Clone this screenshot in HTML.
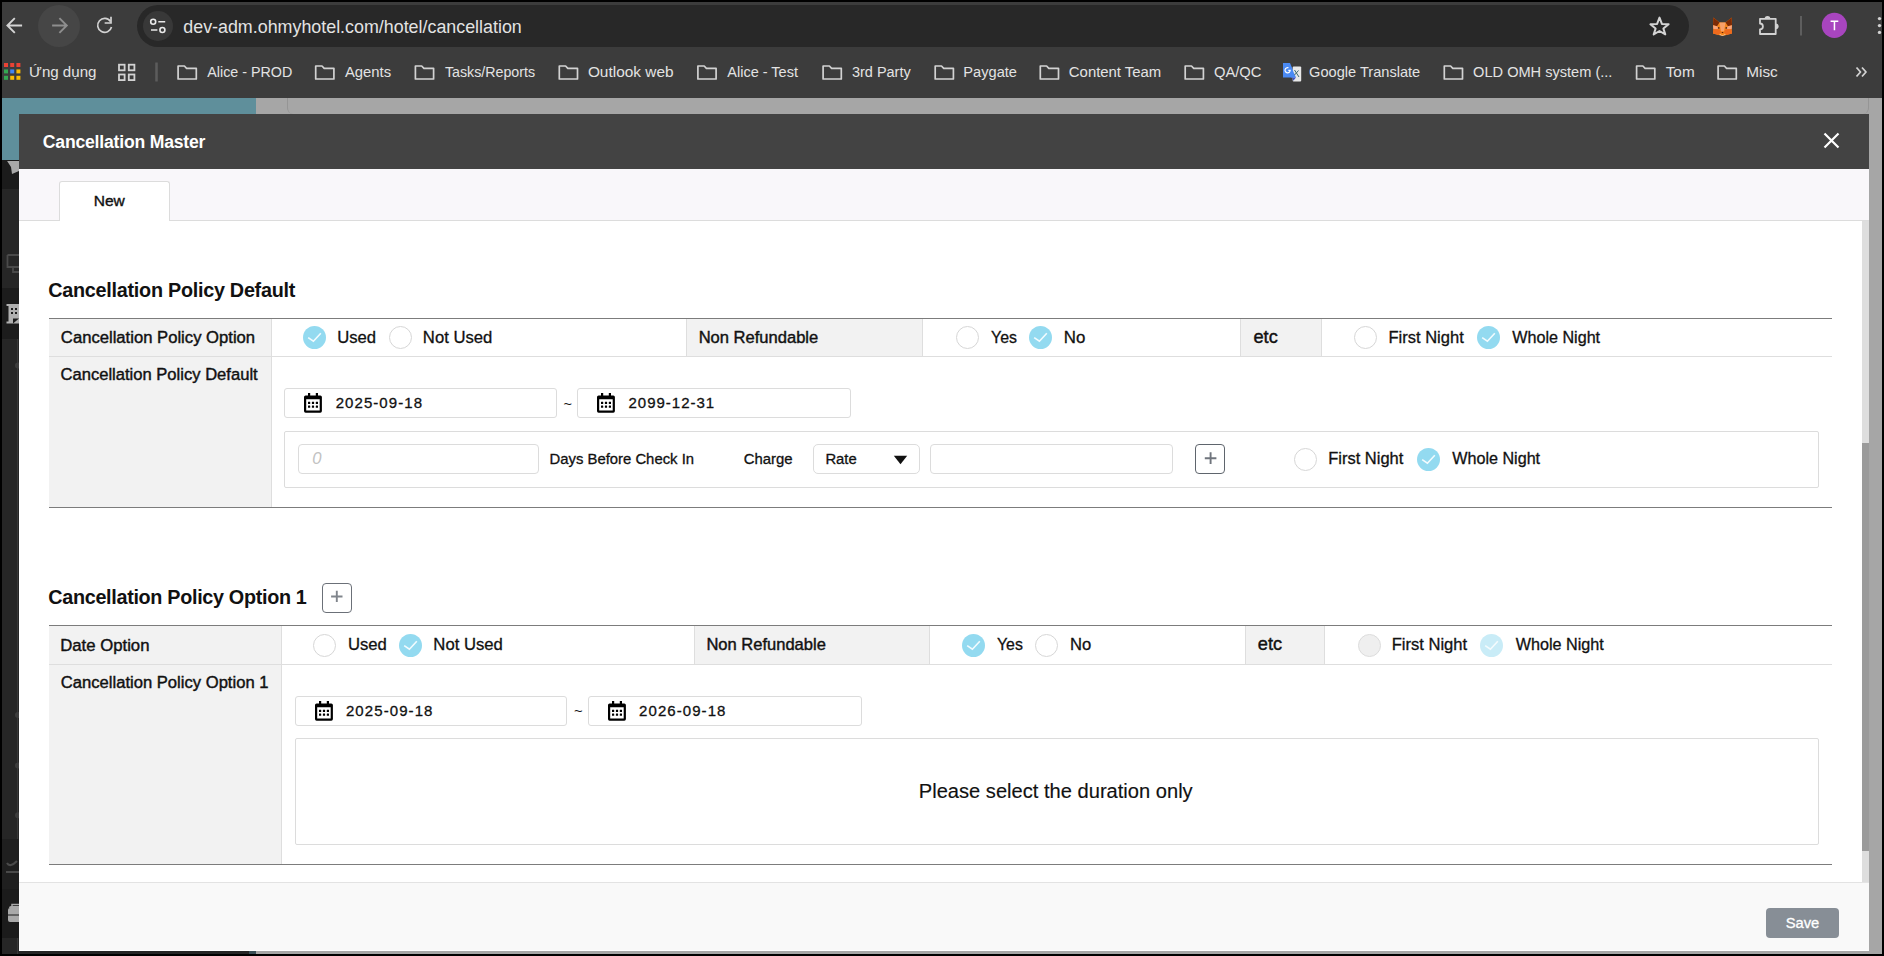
<!DOCTYPE html>
<html><head><meta charset="utf-8">
<style>
*{box-sizing:border-box;margin:0;padding:0}
html,body{width:1884px;height:956px;overflow:hidden;background:#000;font-family:"Liberation Sans",sans-serif;position:relative}
.a{position:absolute}
.tx{white-space:nowrap;font-family:"Liberation Sans",sans-serif}
</style></head><body>
<div class="a" style="left:2px;top:2px;width:1880px;height:96px;background:#3c3c3c"></div>
<div class="a" style="left:38px;top:5px;width:42px;height:42px;background:#464646;border-radius:50%"></div>
<div class="a" style="left:137px;top:5px;width:1552px;height:42px;background:#282828;border-radius:21px"></div>
<div class="a" style="left:143px;top:11px;width:30px;height:30px;background:#383838;border-radius:50%"></div>
<svg class="a" style="left:0;top:0" width="1884" height="100" viewBox="0 0 1884 100">
<g fill="none" stroke="#d4d4d4" stroke-width="1.9">
 <path d="M8.2 25.5 H22.1 M14.8 18.1 L7.4 25.5 L14.8 32.9"/>
</g>
<g fill="none" stroke="#8e8e8e" stroke-width="1.9">
 <path d="M52.1 25.5 H66 M59.4 18.1 L66.8 25.5 L59.4 32.9"/>
</g>
<g fill="none" stroke="#d2d2d2" stroke-width="1.7">
 <path d="M110.5 21.5 A7 7 0 1 0 111.5 27"/>
 <path d="M105.5 23 H111 V17.5" stroke-linecap="square"/>
</g>
<g fill="none" stroke="#e8e8e8" stroke-width="1.6">
 <circle cx="153.2" cy="21.8" r="2.5"/>
 <circle cx="162.4" cy="30" r="2.5"/>
 <path d="M158.3 21.8 H165.2 M151 30 H157.4"/>
</g>
<path d="M1659.5 17.6 L1661.9 23.9 L1668.6 24.3 L1663.4 28.6 L1665.3 34.4 L1659.5 31 L1653.7 34.4 L1655.6 28.6 L1650.4 24.3 L1657.1 23.9 Z" fill="none" stroke="#d4d4d4" stroke-width="2" stroke-linejoin="round"/>
<!-- metamask fox -->
<g transform="translate(1713 17.3)">
 <path d="M0.3 0.3 L6.5 5.2 H12.5 L18.7 0.3 L19 8 L18.6 12 L19 16.2 L13.5 17.8 L9.5 18.6 L5.5 17.8 L0 16.2 L0.4 12 L0 8 Z" fill="#f6851b"/>
 <path d="M0.3 0.3 L6.5 5.2 L4 9 L0 8 Z" fill="#7b2a06"/>
 <path d="M18.7 0.3 L12.5 5.2 L15 9 L19 8 Z" fill="#7b2a06"/>
 <path d="M6.5 5.2 H12.5 L11 14 H8 Z" fill="#f7a06a"/>
 <path d="M0 8 L4 9 L6.5 12 L0.4 12 Z M19 8 L15 9 L12.5 12 L18.6 12 Z" fill="#f9a37a"/>
 <path d="M0.4 12 H6.5 L8 15 L5.5 17.8 L0 16.2 Z M18.6 12 H12.5 L11 15 L13.5 17.8 L19 16.2 Z" fill="#ee6a1e"/>
 <circle cx="5.7" cy="10.6" r="0.9" fill="#5a2a10"/><circle cx="13.3" cy="10.6" r="0.9" fill="#5a2a10"/>
 <path d="M8.3 14.6 H10.7 L9.5 16 Z" fill="#5a1a08"/>
 <path d="M6 16.6 Q9.5 19.8 13 16.6 L11.5 17.2 Q9.5 18.2 7.5 17.2 Z" fill="#f2f2f2"/>
</g>
<!-- puzzle -->
<g fill="none" stroke="#d2d2d2" stroke-width="1.8" stroke-linejoin="round">
 <path d="M1760 18.8 H1775.7 V34 H1760 V29.3 A2.9 2.9 0 0 0 1760 23.5 Z"/>
</g>
<path d="M1764.6 18.8 A2.9 2.9 0 0 1 1770.4 18.8 Z" fill="#d2d2d2"/>
<path d="M1775.7 23.4 A2.9 2.9 0 0 1 1775.7 29.2 Z" fill="#d2d2d2"/>
<path d="M1801 16 V35.5" stroke="#6a6a6a" stroke-width="1.5"/>
<circle cx="1834.4" cy="25.4" r="12.6" fill="#a845bf"/>
<path d="M1830.6 21.3 H1838.3 M1834.45 21.3 V30.3" stroke="#fff" stroke-width="1.5"/>
<g fill="#d2d2d2"><circle cx="1879.5" cy="18.6" r="1.7"/><circle cx="1879.5" cy="25.6" r="1.7"/><circle cx="1879.5" cy="32.4" r="1.7"/></g>
<!-- bookmarks bar icons -->
<g>
 <rect x="4" y="63" width="4" height="4" fill="#ea4335"/><rect x="10.2" y="63" width="4" height="4" fill="#ea4335"/><rect x="16.4" y="63" width="4" height="4" fill="#ea4335"/>
 <rect x="4" y="69.4" width="4" height="4" fill="#34a853"/><rect x="10.2" y="69.4" width="4" height="4" fill="#4285f4"/><rect x="16.4" y="69.4" width="4" height="4" fill="#fbbc04"/>
 <rect x="4" y="75.8" width="4" height="4" fill="#34a853"/><rect x="10.2" y="75.8" width="4" height="4" fill="#fbbc04"/><rect x="16.4" y="75.8" width="4" height="4" fill="#fbbc04"/>
</g>
<g fill="none" stroke="#d2d2d2" stroke-width="1.8">
 <rect x="119" y="64.7" width="5.6" height="5.6"/><rect x="128.8" y="64.7" width="5.6" height="5.6"/>
 <rect x="119" y="74.5" width="5.6" height="5.6"/><rect x="128.8" y="74.5" width="5.6" height="5.6"/>
</g>
<path d="M156.5 62.5 V81.5" stroke="#5c5c5c" stroke-width="2.5"/>
<path d="M1283 63 H1290 L1296 77.5 H1283 Z" fill="#4a8af4"/>
<rect x="1292.7" y="66.5" width="8.5" height="14.9" rx="1" fill="#e8e8e8"/>
<path d="M1291 66.5 L1296 77.5 H1291 Z" fill="#4a8af4"/>
<path d="M1292.5 77.5 L1296 77.5 L1293.3 80.8 Z" fill="#3a4fc4"/>
<path d="M1294.5 70 L1299 77 M1298.5 70.5 L1294.5 75" stroke="#3f6b6f" stroke-width="1"/>
<path d="M1288.5 67.8 A2.6 2.6 0 1 0 1290.2 70.3 H1288.3" fill="none" stroke="#fff" stroke-width="1.2"/>
<g fill="none" stroke="#d2d2d2" stroke-width="1.8" stroke-linejoin="round">
 <path d="M1856.5 67.5 L1860.5 72 L1856.5 76.5 M1862 67.5 L1866 72 L1862 76.5"/>
</g>
</svg>
<svg class="a" style="left:0;top:0" width="1884" height="100"><g fill="none" stroke="#d2d2d2" stroke-width="1.7" stroke-linejoin="round"><path d="M178.1 66 H184.39999999999998 L186.6 68.3 H196.29999999999998 V79 H178.1 Z"/><path d="M315.7 66 H322.0 L324.2 68.3 H333.90000000000003 V79 H315.7 Z"/><path d="M415.4 66 H421.7 L423.9 68.3 H433.6 V79 H415.4 Z"/><path d="M559.3 66 H565.6 L567.8 68.3 H577.5 V79 H559.3 Z"/><path d="M697.9 66 H704.2 L706.4 68.3 H716.1 V79 H697.9 Z"/><path d="M823.1 66 H829.4000000000001 L831.6 68.3 H841.3000000000001 V79 H823.1 Z"/><path d="M935.1999999999999 66 H941.5 L943.6999999999999 68.3 H953.4 V79 H935.1999999999999 Z"/><path d="M1040.3000000000002 66 H1046.6000000000001 L1048.8000000000002 68.3 H1058.5 V79 H1040.3000000000002 Z"/><path d="M1185.2 66 H1191.5 L1193.7 68.3 H1203.3999999999999 V79 H1185.2 Z"/><path d="M1444.3000000000002 66 H1450.6000000000001 L1452.8000000000002 68.3 H1462.5 V79 H1444.3000000000002 Z"/><path d="M1636.6000000000001 66 H1642.9 L1645.1000000000001 68.3 H1654.8 V79 H1636.6000000000001 Z"/><path d="M1718.1000000000001 66 H1724.4 L1726.6000000000001 68.3 H1736.3 V79 H1718.1000000000001 Z"/></g></svg>
<div class="a" style="left:2px;top:98px;width:1880px;height:856px;background:#a6a6a6"></div>
<div class="a" style="left:2px;top:98px;width:254px;height:62px;background:#5f8f9b"></div>
<div class="a" style="left:287px;top:98px;width:1582px;height:16px;border-left:1px solid #959595;border-right:1px solid #959595;border-bottom-left-radius:6px;border-bottom-right-radius:6px"></div>
<div class="a" style="left:2px;top:160px;width:247px;height:794px;background:#262626"></div>
<div class="a" style="left:2px;top:160px;width:247px;height:29px;background:#1b1b1b"></div>
<div class="a" style="left:2px;top:288px;width:247px;height:51px;background:#1c1c1c"></div>
<div class="a" style="left:2px;top:839px;width:247px;height:50px;background:#1f1f1f"></div>
<div class="a" style="left:2px;top:889px;width:247px;height:49px;background:#1b1b1b"></div>
<svg class="a" style="left:0;top:150px" width="20" height="806" viewBox="0 150 20 806">
<path d="M7.1 161 H19 V170.9 L12 174 L11 167 Z" fill="#a9a9a9"/>
<path d="M7.5 255 H19 M7.5 255 V267 H19 M13 267 V272 H19" fill="none" stroke="#4a4a4a" stroke-width="1.8"/>
<path d="M6.5 304 H19 V323.5 H6.5 V321.5 H8.5 V306 H6.5 Z" fill="#b0b0b0"/>
<rect x="11" y="308" width="2" height="2" fill="#1c1c1c"/><rect x="15" y="308" width="2" height="2" fill="#1c1c1c"/>
<rect x="11" y="312" width="2" height="2" fill="#1c1c1c"/><rect x="15" y="312" width="2" height="2" fill="#1c1c1c"/>
<path d="M13 323.5 V318.5 H19" fill="#1c1c1c"/>
<path d="M17.5 339 V839 M17.5 938 V954" stroke="#383838" stroke-width="1"/>
<circle cx="18" cy="365.6" r="3" fill="#3d3d3d"/>
<circle cx="18" cy="715" r="3" fill="#3d3d3d"/><circle cx="18" cy="765.4" r="3" fill="#3d3d3d"/><circle cx="18" cy="815.3" r="3" fill="#3d3d3d"/>
<path d="M7 863 Q10 868 17 861 M6 872 H19" fill="none" stroke="#4a4a4a" stroke-width="2.2"/>
<path d="M9 908 Q9 906 11 906 H19 V922 H10 Q8 922 8 920 V910 Q8 908 10 908 Z" fill="#a9a9a9"/>
<path d="M12 906 V904.6 H19" fill="none" stroke="#a9a9a9" stroke-width="1.5"/>
<path d="M8 915 H19" stroke="#1b1b1b" stroke-width="1"/>
</svg>
<div class="a" style="left:249px;top:160px;width:7px;height:794px;background:#3a5057"></div>
<div class="a" style="left:1869px;top:98px;width:13px;height:856px;background:#a6a6a6"></div>
<div class="a" style="left:19px;top:114px;width:1850px;height:837px;background:#fff"></div>
<div class="a" style="left:19px;top:114px;width:1850px;height:55px;background:#434343"></div>
<svg class="a" style="left:1820px;top:129px" width="24" height="24"><path d="M4.5 4.5 L18.5 18.5 M18.5 4.5 L4.5 18.5" stroke="#fff" stroke-width="2.2"/></svg>
<div class="a" style="left:19px;top:169px;width:1850px;height:52px;background:#f9f7fa;border-bottom:1px solid #dcdcdc"></div>
<div class="a" style="left:59px;top:181px;width:111px;height:40px;background:#fff;border:1px solid #dcdcdc;border-bottom:none;border-radius:3px 3px 0 0"></div>
<div class="a" style="left:1862px;top:221px;width:7px;height:661px;background:#dedede"></div>
<div class="a" style="left:1862px;top:443px;width:7px;height:408px;background:#9b9b9b"></div>
<div class="a" style="left:19px;top:882px;width:1850px;height:69px;background:#f9f9f9;border-top:1px solid #e3e3e3;border-bottom:1px solid #fff"></div>
<div class="a" style="left:1766px;top:908px;width:73px;height:30px;background:#878e96;border-radius:4px"></div>
<div class="a" style="left:49px;top:318px;width:1783px;height:1px;background:#7c7c7c"></div>
<div class="a" style="left:49px;top:319px;width:222px;height:188px;background:#f2f2f2"></div>
<div class="a" style="left:271px;top:319px;width:1px;height:188px;background:#dedede"></div>
<div class="a" style="left:686px;top:319px;width:237px;height:37px;background:#f2f2f2;border-left:1px solid #dedede;border-right:1px solid #dedede"></div>
<div class="a" style="left:1240px;top:319px;width:82px;height:37px;background:#f2f2f2;border-left:1px solid #dedede;border-right:1px solid #dedede"></div>
<div class="a" style="left:49px;top:356px;width:1783px;height:1px;background:#dedede"></div>
<div class="a" style="left:49px;top:507px;width:1783px;height:1px;background:#7c7c7c"></div>
<svg class="a" style="left:303px;top:326px" width="23" height="23"><circle cx="11.5" cy="11.5" r="11.5" fill="#93daf0"/><path d="M5.2 11.6 L10.4 15.2 L17.8 7.2" fill="none" stroke="#f2fbfe" stroke-width="1.6"/></svg>
<svg class="a" style="left:389px;top:326px" width="23" height="23"><circle cx="11.5" cy="11.5" r="11" fill="#fff" stroke="#d6d6d6" stroke-width="1"/></svg>
<svg class="a" style="left:956px;top:326px" width="23" height="23"><circle cx="11.5" cy="11.5" r="11" fill="#fff" stroke="#d6d6d6" stroke-width="1"/></svg>
<svg class="a" style="left:1029px;top:326px" width="23" height="23"><circle cx="11.5" cy="11.5" r="11.5" fill="#93daf0"/><path d="M5.2 11.6 L10.4 15.2 L17.8 7.2" fill="none" stroke="#f2fbfe" stroke-width="1.6"/></svg>
<svg class="a" style="left:1354px;top:326px" width="23" height="23"><circle cx="11.5" cy="11.5" r="11" fill="#fff" stroke="#d6d6d6" stroke-width="1"/></svg>
<svg class="a" style="left:1477px;top:326px" width="23" height="23"><circle cx="11.5" cy="11.5" r="11.5" fill="#93daf0"/><path d="M5.2 11.6 L10.4 15.2 L17.8 7.2" fill="none" stroke="#f2fbfe" stroke-width="1.6"/></svg>
<div class="a" style="left:284px;top:388px;width:273px;height:30px;border:1px solid #dcdcdc;border-radius:3px;background:#fff"></div>
<div class="a" style="left:577px;top:388px;width:274px;height:30px;border:1px solid #dcdcdc;border-radius:3px;background:#fff"></div>
<svg class="a" style="left:304px;top:393px" width="19" height="21" viewBox="0 0 19 21"><g fill="#000">
<rect x="4" y="0" width="2.2" height="4"/><rect x="11.8" y="0" width="2.2" height="4"/>
<path fill-rule="evenodd" d="M1.6 2.4 H16.3 A1.6 1.6 0 0 1 17.9 4 V18.1 A1.6 1.6 0 0 1 16.3 19.7 H1.6 A1.6 1.6 0 0 1 0 18.1 V4 A1.6 1.6 0 0 1 1.6 2.4 Z M2.2 6.3 V17.5 H15.7 V6.3 Z"/>
<rect x="4" y="8.8" width="2.2" height="2.2" rx="0.3"/><rect x="7.9" y="8.8" width="2.2" height="2.2" rx="0.3"/><rect x="11.8" y="8.8" width="2.2" height="2.2" rx="0.3"/>
<rect x="4" y="12.6" width="2.2" height="2.2" rx="0.3"/><rect x="7.9" y="12.6" width="2.2" height="2.2" rx="0.3"/><rect x="11.8" y="12.6" width="2.2" height="2.2" rx="0.3"/>
</g></svg>
<svg class="a" style="left:597px;top:393px" width="19" height="21" viewBox="0 0 19 21"><g fill="#000">
<rect x="4" y="0" width="2.2" height="4"/><rect x="11.8" y="0" width="2.2" height="4"/>
<path fill-rule="evenodd" d="M1.6 2.4 H16.3 A1.6 1.6 0 0 1 17.9 4 V18.1 A1.6 1.6 0 0 1 16.3 19.7 H1.6 A1.6 1.6 0 0 1 0 18.1 V4 A1.6 1.6 0 0 1 1.6 2.4 Z M2.2 6.3 V17.5 H15.7 V6.3 Z"/>
<rect x="4" y="8.8" width="2.2" height="2.2" rx="0.3"/><rect x="7.9" y="8.8" width="2.2" height="2.2" rx="0.3"/><rect x="11.8" y="8.8" width="2.2" height="2.2" rx="0.3"/>
<rect x="4" y="12.6" width="2.2" height="2.2" rx="0.3"/><rect x="7.9" y="12.6" width="2.2" height="2.2" rx="0.3"/><rect x="11.8" y="12.6" width="2.2" height="2.2" rx="0.3"/>
</g></svg>
<div class="a" style="left:284px;top:431px;width:1535px;height:57px;border:1px solid #dcdcdc;border-radius:2px;background:#fff"></div>
<div class="a" style="left:298px;top:444px;width:241px;height:30px;border:1px solid #dcdcdc;border-radius:4px;background:#fff"></div>
<div class="a" style="left:813px;top:444px;width:107px;height:30px;border:1px solid #dcdcdc;border-radius:5px;background:#fff"></div>
<div class="a" style="left:930px;top:444px;width:243px;height:30px;border:1px solid #dcdcdc;border-radius:4px;background:#fff"></div>
<div class="a" style="left:1195px;top:444px;width:30px;height:30px;border:1px solid #5f656d;border-radius:4px;background:#fff"></div>
<svg class="a" style="left:1195px;top:444px" width="30" height="30"><path d="M15.6 8.3 V20 M9.8 14.2 H21.4" stroke="#70757d" stroke-width="1.9"/></svg>
<svg class="a" style="left:893px;top:455px" width="15" height="10"><path d="M0.8 0.8 H14.2 L7.5 9.2 Z" fill="#111"/></svg>
<svg class="a" style="left:1294px;top:448px" width="23" height="23"><circle cx="11.5" cy="11.5" r="11" fill="#fff" stroke="#d6d6d6" stroke-width="1"/></svg>
<svg class="a" style="left:1417px;top:448px" width="23" height="23"><circle cx="11.5" cy="11.5" r="11.5" fill="#93daf0"/><path d="M5.2 11.6 L10.4 15.2 L17.8 7.2" fill="none" stroke="#f2fbfe" stroke-width="1.6"/></svg>
<div class="a" style="left:322px;top:583px;width:30px;height:30px;border:1px solid #6b7078;border-radius:4px;background:#fff"></div>
<svg class="a" style="left:322px;top:583px" width="30" height="30"><path d="M14.8 7.8 V19.1 M9.1 13.5 H20.5" stroke="#80858c" stroke-width="1.9"/></svg>
<div class="a" style="left:49px;top:625px;width:1783px;height:1px;background:#7c7c7c"></div>
<div class="a" style="left:49px;top:626px;width:232px;height:238px;background:#f2f2f2"></div>
<div class="a" style="left:281px;top:626px;width:1px;height:238px;background:#dedede"></div>
<div class="a" style="left:694px;top:626px;width:236px;height:38px;background:#f2f2f2;border-left:1px solid #dedede;border-right:1px solid #dedede"></div>
<div class="a" style="left:1245px;top:626px;width:80px;height:38px;background:#f2f2f2;border-left:1px solid #dedede;border-right:1px solid #dedede"></div>
<div class="a" style="left:49px;top:664px;width:1783px;height:1px;background:#dedede"></div>
<div class="a" style="left:49px;top:864px;width:1783px;height:1px;background:#7c7c7c"></div>
<svg class="a" style="left:313px;top:634px" width="23" height="23"><circle cx="11.5" cy="11.5" r="11" fill="#fff" stroke="#d6d6d6" stroke-width="1"/></svg>
<svg class="a" style="left:399px;top:634px" width="23" height="23"><circle cx="11.5" cy="11.5" r="11.5" fill="#93daf0"/><path d="M5.2 11.6 L10.4 15.2 L17.8 7.2" fill="none" stroke="#f2fbfe" stroke-width="1.6"/></svg>
<svg class="a" style="left:962px;top:634px" width="23" height="23"><circle cx="11.5" cy="11.5" r="11.5" fill="#93daf0"/><path d="M5.2 11.6 L10.4 15.2 L17.8 7.2" fill="none" stroke="#f2fbfe" stroke-width="1.6"/></svg>
<svg class="a" style="left:1035px;top:634px" width="23" height="23"><circle cx="11.5" cy="11.5" r="11" fill="#fff" stroke="#d6d6d6" stroke-width="1"/></svg>
<svg class="a" style="left:1358px;top:634px" width="23" height="23"><circle cx="11.5" cy="11.5" r="11" fill="#efefef" stroke="#dcdcdc" stroke-width="1"/></svg>
<svg class="a" style="left:1480px;top:634px" width="23" height="23"><circle cx="11.5" cy="11.5" r="11.5" fill="#c9ecf7"/><path d="M5.2 11.6 L10.4 15.2 L17.8 7.2" fill="none" stroke="#f4fbfd" stroke-width="1.6"/></svg>
<div class="a" style="left:295px;top:696px;width:272px;height:30px;border:1px solid #dcdcdc;border-radius:3px;background:#fff"></div>
<div class="a" style="left:588px;top:696px;width:274px;height:30px;border:1px solid #dcdcdc;border-radius:3px;background:#fff"></div>
<svg class="a" style="left:315px;top:701px" width="19" height="21" viewBox="0 0 19 21"><g fill="#000">
<rect x="4" y="0" width="2.2" height="4"/><rect x="11.8" y="0" width="2.2" height="4"/>
<path fill-rule="evenodd" d="M1.6 2.4 H16.3 A1.6 1.6 0 0 1 17.9 4 V18.1 A1.6 1.6 0 0 1 16.3 19.7 H1.6 A1.6 1.6 0 0 1 0 18.1 V4 A1.6 1.6 0 0 1 1.6 2.4 Z M2.2 6.3 V17.5 H15.7 V6.3 Z"/>
<rect x="4" y="8.8" width="2.2" height="2.2" rx="0.3"/><rect x="7.9" y="8.8" width="2.2" height="2.2" rx="0.3"/><rect x="11.8" y="8.8" width="2.2" height="2.2" rx="0.3"/>
<rect x="4" y="12.6" width="2.2" height="2.2" rx="0.3"/><rect x="7.9" y="12.6" width="2.2" height="2.2" rx="0.3"/><rect x="11.8" y="12.6" width="2.2" height="2.2" rx="0.3"/>
</g></svg>
<svg class="a" style="left:608px;top:701px" width="19" height="21" viewBox="0 0 19 21"><g fill="#000">
<rect x="4" y="0" width="2.2" height="4"/><rect x="11.8" y="0" width="2.2" height="4"/>
<path fill-rule="evenodd" d="M1.6 2.4 H16.3 A1.6 1.6 0 0 1 17.9 4 V18.1 A1.6 1.6 0 0 1 16.3 19.7 H1.6 A1.6 1.6 0 0 1 0 18.1 V4 A1.6 1.6 0 0 1 1.6 2.4 Z M2.2 6.3 V17.5 H15.7 V6.3 Z"/>
<rect x="4" y="8.8" width="2.2" height="2.2" rx="0.3"/><rect x="7.9" y="8.8" width="2.2" height="2.2" rx="0.3"/><rect x="11.8" y="8.8" width="2.2" height="2.2" rx="0.3"/>
<rect x="4" y="12.6" width="2.2" height="2.2" rx="0.3"/><rect x="7.9" y="12.6" width="2.2" height="2.2" rx="0.3"/><rect x="11.8" y="12.6" width="2.2" height="2.2" rx="0.3"/>
</g></svg>
<div class="a" style="left:295px;top:738px;width:1524px;height:107px;border:1px solid #dcdcdc;border-radius:2px;background:#fff"></div>
<div class="a tx" style="left:183.28px;top:17px;font-size:17.88px;line-height:20px;font-weight:normal;font-style:normal;color:#e3e3e3;letter-spacing:0.000px;">dev-adm.ohmyhotel.com/hotel/cancellation</div>
<div class="a tx" style="left:29.04px;top:63px;font-size:15.08px;line-height:17px;font-weight:normal;font-style:normal;color:#e3e3e3;letter-spacing:0.000px;">Ứng dụng</div>
<div class="a tx" style="left:207.30px;top:64px;font-size:14.31px;line-height:16px;font-weight:normal;font-style:normal;color:#e3e3e3;letter-spacing:0.000px;">Alice - PROD</div>
<div class="a tx" style="left:344.90px;top:64px;font-size:14.85px;line-height:16px;font-weight:normal;font-style:normal;color:#e3e3e3;letter-spacing:0.000px;">Agents</div>
<div class="a tx" style="left:444.92px;top:64px;font-size:14.22px;line-height:16px;font-weight:normal;font-style:normal;color:#e3e3e3;letter-spacing:0.000px;">Tasks/Reports</div>
<div class="a tx" style="left:587.88px;top:63px;font-size:15.41px;line-height:17px;font-weight:normal;font-style:normal;color:#e3e3e3;letter-spacing:0.000px;">Outlook web</div>
<div class="a tx" style="left:727.30px;top:64px;font-size:14.51px;line-height:16px;font-weight:normal;font-style:normal;color:#e3e3e3;letter-spacing:0.000px;">Alice - Test</div>
<div class="a tx" style="left:851.97px;top:64px;font-size:14.48px;line-height:16px;font-weight:normal;font-style:normal;color:#e3e3e3;letter-spacing:0.000px;">3rd Party</div>
<div class="a tx" style="left:963.33px;top:64px;font-size:14.61px;line-height:16px;font-weight:normal;font-style:normal;color:#e3e3e3;letter-spacing:0.000px;">Paygate</div>
<div class="a tx" style="left:1068.85px;top:64px;font-size:14.90px;line-height:16px;font-weight:normal;font-style:normal;color:#e3e3e3;letter-spacing:0.000px;">Content Team</div>
<div class="a tx" style="left:1213.91px;top:64px;font-size:14.76px;line-height:16px;font-weight:normal;font-style:normal;color:#e3e3e3;letter-spacing:0.000px;">QA/QC</div>
<div class="a tx" style="left:1309.07px;top:64px;font-size:14.60px;line-height:16px;font-weight:normal;font-style:normal;color:#e3e3e3;letter-spacing:0.000px;">Google Translate</div>
<div class="a tx" style="left:1473.12px;top:64px;font-size:14.59px;line-height:16px;font-weight:normal;font-style:normal;color:#e3e3e3;letter-spacing:0.000px;">OLD OMH system (...</div>
<div class="a tx" style="left:1665.69px;top:63px;font-size:15.34px;line-height:17px;font-weight:normal;font-style:normal;color:#e3e3e3;letter-spacing:0.000px;">Tom</div>
<div class="a tx" style="left:1746.27px;top:63px;font-size:15.34px;line-height:17px;font-weight:normal;font-style:normal;color:#e3e3e3;letter-spacing:0.000px;">Misc</div>
<div class="a tx" style="left:42.80px;top:132px;font-size:17.60px;line-height:20px;font-weight:bold;font-style:normal;color:#fff;letter-spacing:-0.200px;">Cancellation Master</div>
<div class="a tx" style="left:93.76px;top:192px;font-size:15.56px;line-height:17px;font-weight:normal;font-style:normal;color:#111;letter-spacing:0.000px;-webkit-text-stroke:0.4px #111">New</div>
<div class="a tx" style="left:1785.71px;top:915px;font-size:14.75px;line-height:16px;font-weight:normal;font-style:normal;color:#fff;letter-spacing:0.000px;-webkit-text-stroke:0.3px #fff">Save</div>
<div class="a tx" style="left:48.31px;top:279px;font-size:19.80px;line-height:22px;font-weight:bold;font-style:normal;color:#111;letter-spacing:-0.266px;">Cancellation Policy Default</div>
<div class="a tx" style="left:60.87px;top:328px;font-size:16.65px;line-height:19px;font-weight:normal;font-style:normal;color:#111;letter-spacing:0.000px;-webkit-text-stroke:0.42px #111">Cancellation Policy Option</div>
<div class="a tx" style="left:337.23px;top:328px;font-size:16.66px;line-height:19px;font-weight:normal;font-style:normal;color:#111;letter-spacing:0.000px;-webkit-text-stroke:0.3px #111">Used</div>
<div class="a tx" style="left:422.87px;top:328px;font-size:16.67px;line-height:19px;font-weight:normal;font-style:normal;color:#111;letter-spacing:0.000px;-webkit-text-stroke:0.3px #111">Not Used</div>
<div class="a tx" style="left:698.67px;top:328px;font-size:16.56px;line-height:19px;font-weight:normal;font-style:normal;color:#111;letter-spacing:0.000px;-webkit-text-stroke:0.42px #111">Non Refundable</div>
<div class="a tx" style="left:991.08px;top:329px;font-size:15.87px;line-height:17px;font-weight:normal;font-style:normal;color:#111;letter-spacing:0.000px;-webkit-text-stroke:0.3px #111">Yes</div>
<div class="a tx" style="left:1063.85px;top:328px;font-size:16.87px;line-height:19px;font-weight:normal;font-style:normal;color:#111;letter-spacing:0.000px;-webkit-text-stroke:0.3px #111">No</div>
<div class="a tx" style="left:1253.47px;top:327px;font-size:18.21px;line-height:20px;font-weight:normal;font-style:normal;color:#111;letter-spacing:0.000px;-webkit-text-stroke:0.42px #111">etc</div>
<div class="a tx" style="left:1388.48px;top:328px;font-size:16.52px;line-height:19px;font-weight:normal;font-style:normal;color:#111;letter-spacing:0.000px;-webkit-text-stroke:0.3px #111">First Night</div>
<div class="a tx" style="left:1512.20px;top:328px;font-size:16.15px;line-height:18px;font-weight:normal;font-style:normal;color:#111;letter-spacing:0.000px;-webkit-text-stroke:0.3px #111">Whole Night</div>
<div class="a tx" style="left:60.47px;top:365px;font-size:16.59px;line-height:19px;font-weight:normal;font-style:normal;color:#111;letter-spacing:0.000px;-webkit-text-stroke:0.42px #111">Cancellation Policy Default</div>
<div class="a tx" style="left:335.65px;top:394px;font-size:15.00px;line-height:17px;font-weight:normal;font-style:normal;color:#111;letter-spacing:1.074px;-webkit-text-stroke:0.3px #111">2025-09-18</div>
<div class="a tx" style="left:563.42px;top:396px;font-size:14.60px;line-height:16px;font-weight:normal;font-style:normal;color:#111;letter-spacing:0.000px;">~</div>
<div class="a tx" style="left:628.45px;top:394px;font-size:15.00px;line-height:17px;font-weight:normal;font-style:normal;color:#111;letter-spacing:1.002px;-webkit-text-stroke:0.3px #111">2099-12-31</div>
<div class="a tx" style="left:312.33px;top:449px;font-size:16.67px;line-height:19px;font-weight:normal;font-style:italic;color:#c2c2c2;letter-spacing:0.000px;">0</div>
<div class="a tx" style="left:549.51px;top:451px;font-size:14.86px;line-height:16px;font-weight:normal;font-style:normal;color:#111;letter-spacing:0.000px;-webkit-text-stroke:0.3px #111">Days Before Check In</div>
<div class="a tx" style="left:743.65px;top:451px;font-size:14.90px;line-height:16px;font-weight:normal;font-style:normal;color:#111;letter-spacing:0.000px;-webkit-text-stroke:0.3px #111">Charge</div>
<div class="a tx" style="left:825.41px;top:451px;font-size:14.83px;line-height:16px;font-weight:normal;font-style:normal;color:#111;letter-spacing:0.000px;-webkit-text-stroke:0.3px #111">Rate</div>
<div class="a tx" style="left:1328.28px;top:449px;font-size:16.48px;line-height:18px;font-weight:normal;font-style:normal;color:#111;letter-spacing:0.000px;-webkit-text-stroke:0.3px #111">First Night</div>
<div class="a tx" style="left:1452.20px;top:449px;font-size:16.15px;line-height:18px;font-weight:normal;font-style:normal;color:#111;letter-spacing:0.000px;-webkit-text-stroke:0.3px #111">Whole Night</div>
<div class="a tx" style="left:48.31px;top:586px;font-size:19.80px;line-height:22px;font-weight:bold;font-style:normal;color:#111;letter-spacing:-0.316px;">Cancellation Policy Option 1</div>
<div class="a tx" style="left:60.26px;top:636px;font-size:16.73px;line-height:19px;font-weight:normal;font-style:normal;color:#111;letter-spacing:0.000px;-webkit-text-stroke:0.42px #111">Date Option</div>
<div class="a tx" style="left:347.93px;top:635px;font-size:16.66px;line-height:19px;font-weight:normal;font-style:normal;color:#111;letter-spacing:0.000px;-webkit-text-stroke:0.3px #111">Used</div>
<div class="a tx" style="left:433.37px;top:635px;font-size:16.67px;line-height:19px;font-weight:normal;font-style:normal;color:#111;letter-spacing:0.000px;-webkit-text-stroke:0.3px #111">Not Used</div>
<div class="a tx" style="left:706.38px;top:635px;font-size:16.55px;line-height:19px;font-weight:normal;font-style:normal;color:#111;letter-spacing:0.000px;-webkit-text-stroke:0.42px #111">Non Refundable</div>
<div class="a tx" style="left:996.98px;top:636px;font-size:15.87px;line-height:17px;font-weight:normal;font-style:normal;color:#111;letter-spacing:0.000px;-webkit-text-stroke:0.3px #111">Yes</div>
<div class="a tx" style="left:1070.07px;top:635px;font-size:16.61px;line-height:19px;font-weight:normal;font-style:normal;color:#111;letter-spacing:0.000px;-webkit-text-stroke:0.3px #111">No</div>
<div class="a tx" style="left:1257.77px;top:634px;font-size:18.21px;line-height:20px;font-weight:normal;font-style:normal;color:#111;letter-spacing:0.000px;-webkit-text-stroke:0.42px #111">etc</div>
<div class="a tx" style="left:1391.67px;top:635px;font-size:16.57px;line-height:19px;font-weight:normal;font-style:normal;color:#111;letter-spacing:0.000px;-webkit-text-stroke:0.3px #111">First Night</div>
<div class="a tx" style="left:1515.80px;top:635px;font-size:16.17px;line-height:18px;font-weight:normal;font-style:normal;color:#111;letter-spacing:0.000px;-webkit-text-stroke:0.3px #111">Whole Night</div>
<div class="a tx" style="left:60.77px;top:673px;font-size:16.61px;line-height:19px;font-weight:normal;font-style:normal;color:#111;letter-spacing:0.000px;-webkit-text-stroke:0.42px #111">Cancellation Policy Option 1</div>
<div class="a tx" style="left:345.95px;top:702px;font-size:15.00px;line-height:17px;font-weight:normal;font-style:normal;color:#111;letter-spacing:1.085px;-webkit-text-stroke:0.3px #111">2025-09-18</div>
<div class="a tx" style="left:574.01px;top:703px;font-size:14.80px;line-height:16px;font-weight:normal;font-style:normal;color:#111;letter-spacing:0.000px;">~</div>
<div class="a tx" style="left:639.05px;top:702px;font-size:15.00px;line-height:17px;font-weight:normal;font-style:normal;color:#111;letter-spacing:1.074px;-webkit-text-stroke:0.3px #111">2026-09-18</div>
<div class="a tx" style="left:918.79px;top:780px;font-size:20.13px;line-height:22px;font-weight:normal;font-style:normal;color:#111;letter-spacing:0.000px;-webkit-text-stroke:0.15px #111">Please select the duration only</div>
</body></html>
